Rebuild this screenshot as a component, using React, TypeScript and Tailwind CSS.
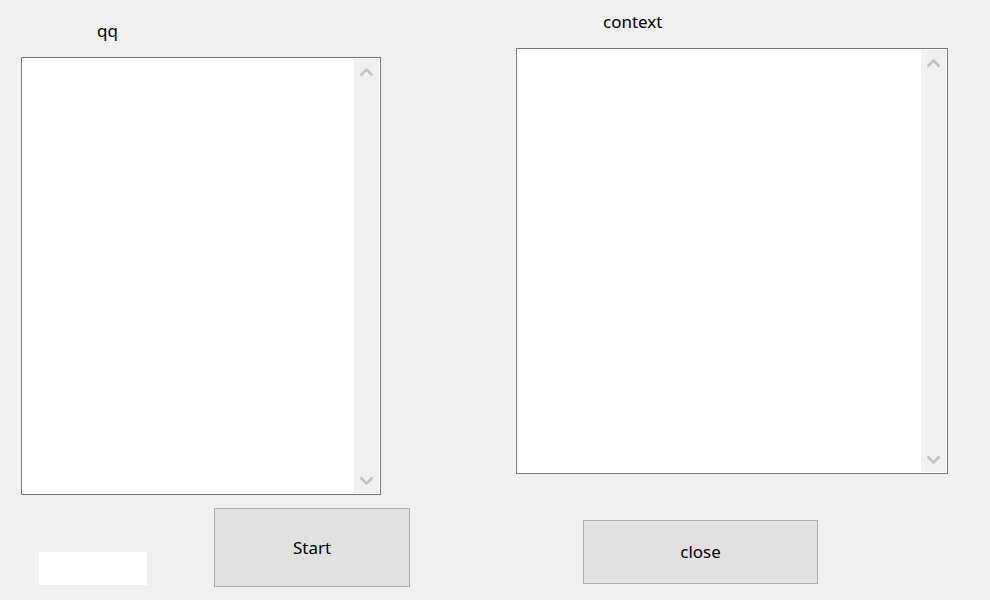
import React from 'react'

const font = { fontFamily: '"Noto Sans", "Open Sans", sans-serif' }

function ScrollBox({ width, height }: { width: string; height: string }) {
  return (
    <div className={`${width} ${height} border border-[#7a7a7a] bg-white flex`}>
      <div className="flex-1" />
      {/* vertical scrollbar */}
      <div className="w-[25px] my-px mr-px bg-[#f0f0f0] flex flex-col justify-between">
        <svg width="25" height="25" viewBox="0 0 25 25">
          <path d="M6.5 16.5 L12.5 10.5 L18.5 16.5" fill="none" stroke="#c2c2c2" strokeWidth="2.5" />
        </svg>
        <svg width="25" height="25" viewBox="0 0 25 25">
          <path d="M6.5 9.5 L12.5 15.5 L18.5 9.5" fill="none" stroke="#c2c2c2" strokeWidth="2.5" />
        </svg>
      </div>
    </div>
  )
}

function Button({ label, className }: { label: string; className: string }) {
  return (
    <button
      className={`${className} shrink-0 bg-[#e1e1e1] border border-[#adadad] text-[17px] text-black flex items-center justify-center`}
    >
      {label}
    </button>
  )
}

export default function App() {
  return (
    <div className="w-[990px] h-[600px] bg-[#f0f0f0] flex items-start overflow-hidden" style={font}>
      {/* Left column */}
      <div className="ml-[21px] w-[360px] shrink-0 pt-[21px] flex flex-col">
        <div className="pl-[76px] h-[20px] leading-[20px] text-[17px] text-black">qq</div>
        <div className="mt-[16px]">
          <ScrollBox width="w-[360px]" height="h-[438px]" />
        </div>
        <div className="mt-[13px] flex items-start">
          <div className="ml-[18px] mt-[44px] w-[108px] h-[33px] shrink-0 bg-white" />
          <Button label="Start" className="ml-[67px] w-[196px] h-[79px]" />
        </div>
      </div>

      {/* Right column */}
      <div className="ml-[135px] w-[432px] shrink-0 pt-[12px] flex flex-col">
        <div className="pl-[87px] h-[20px] leading-[20px] text-[17px] text-black">context</div>
        <div className="mt-[16px]">
          <ScrollBox width="w-[432px]" height="h-[426px]" />
        </div>
        <div className="mt-[46px]">
          <Button label="close" className="ml-[67px] w-[235px] h-[64px]" />
        </div>
      </div>
    </div>
  )
}
